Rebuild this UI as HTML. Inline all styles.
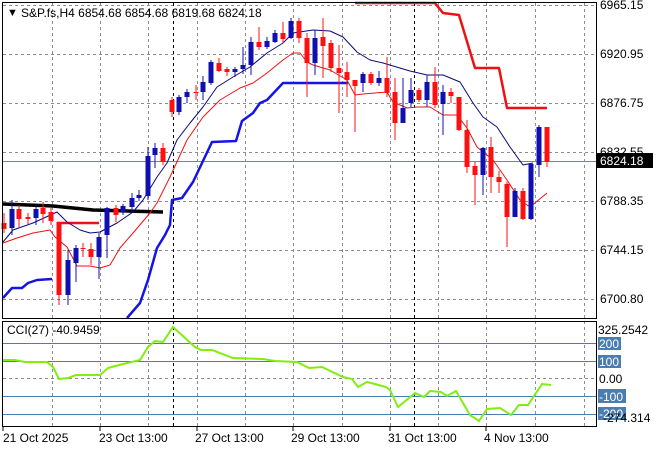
<!DOCTYPE html>
<html><head><meta charset="utf-8"><style>
html,body{margin:0;padding:0;background:#fff;}
svg{display:block;font-family:"Liberation Sans",sans-serif;}
</style></head><body>
<svg id="s" width="660" height="450" viewBox="0 0 660 450" xmlns="http://www.w3.org/2000/svg">
<rect width="660" height="450" fill="#fff"/>
<g id="grid" stroke="#8c8c98" stroke-width="1" stroke-dasharray="3,3" fill="none">
<path d="M3 5.5H596M3 54.5H596M3 103.5H596M3 152.5H596M3 201.5H596M3 250.5H596M3 299.5H596M3 378.5H596"/>
<path d="M52.5 3V318M100.5 3V318M148.5 3V318M197.5 3V318M245.5 3V318M293.5 3V318M342.5 3V318M390.5 3V318M438.5 3V318M486.5 3V318M535.5 3V318M584.5 3V318"/>
<path d="M52.5 321V426M100.5 321V426M148.5 321V426M197.5 321V426M245.5 321V426M293.5 321V426M342.5 321V426M390.5 321V426M438.5 321V426M486.5 321V426M535.5 321V426M584.5 321V426"/>
</g>
<path d="M173.5 3V318M414.5 3V318M173.5 321V426M414.5 321V426" stroke="#000" stroke-dasharray="3,3"/>
<path d="M3 161.5H596" stroke="#7c8490"/>
<path d="M3 343.5H596M3 361.5H596M3 396.5H596M3 414.5H596" stroke="#4a7eb0"/>
<g id="lines" fill="none" stroke-linejoin="round">
<polyline stroke="#1414e6" stroke-width="2.5" points="3,298 12,288 22,288 28,283 37,280 52,279"/>
<polyline stroke="#1414e6" stroke-width="2.5" points="127,318 140,303 148,280 157,248 165,235 170,225 172,200 182,198 193,182 212,142 236,141 242,121 253,113 260,103 267,100 283,83 348,83"/>
<polyline stroke="#ee1111" stroke-width="2.5" points="355,3 435,3 443,13 459,15 475,68 499,68 507,108 547,108"/>
<polyline stroke="#ee1111" stroke-width="2.5" points="57,223 99,223"/>
<polyline stroke="#000" stroke-width="3.5" points="3,204 53,206 93,210 163,212"/>
<polyline stroke="#0a0a80" stroke-width="1" points="3,242 13,230 33,223 57,212 67,222 80,230 90,233 100,232 117,223 133,212 143,200 157,177 167,163 177,140 190,123 203,107 217,87 233,77 250,67 267,53 283,43 293,33 313,30 330,31 343,37 357,52 370,60 383,63 410,71 427,75 443,75 460,82 473,103 483,117 497,127 510,147 523,165 533,163"/>
<polyline stroke="#ee1111" stroke-width="1" points="3,243 17,238 33,233 50,230 55,237 67,247 77,266 90,266 100,268 110,265 120,248 133,233 150,213 157,203 170,177 187,140 203,117 220,100 240,88 253,83 267,73 283,60 293,53 300,53 307,62 313,65 330,70 347,80 355,95 363,94 387,92 393,102 407,108 417,107 430,107 443,115 457,115 467,128 477,147 493,160 507,180 520,200 530,207 547,193"/>
</g>
<g id="c"></g>
<polyline fill="none" stroke="#80ee10" stroke-width="2" points="3,360 15,360 25,362 47,362 53,367 59,379 68,378 76,375 100,375 108,368 119,365 140,360 148,347 155,341 163,342 173,327 195,347 201,350 212,350 233,358 263,359 275,361 297,362 309,368 322,367 343,377 352,379 358,387 367,382 375,384 386,387 390,390 398,407 415,393 424,397 430,391 441,392 447,396 456,391 470,415 479,421 487,409 500,408 511,415 519,405 528,405 542,384 551,385"/>
<path d="M2.5 2.5H596.5V318.5H2.5Z M2.5 321.5H596.5V426.5H2.5Z" fill="none" stroke="#000"/>
<path d="M3 427v4M100 427v4M197 427v4M293 427v4M390 427v4M486 427v4" stroke="#000"/>
<g font-size="12" fill="#000">
<text x="7" y="16" font-size="11">▼</text>
<text x="21" y="17">S&amp;P.fs,H4  6854.68 6854.68 6819.68 6824.18</text>
<text x="600" y="9">6965.15</text>
<text x="600" y="58">6920.95</text>
<text x="600" y="107">6876.75</text>
<text x="600" y="156">6832.55</text>
<text x="600" y="205">6788.35</text>
<text x="600" y="254">6744.15</text>
<text x="600" y="303">6700.80</text>
<rect x="597" y="153" width="56" height="15" fill="#000"/>
<text x="600" y="165" fill="#fff">6824.18</text>
<text x="7" y="334">CCI(27) -40.9459</text>
<text x="598" y="334">325.2542</text>
<rect x="598" y="337" width="23" height="13" fill="#4a7eb0"/><text x="599" y="348" fill="#fff">200</text>
<rect x="598" y="355" width="23" height="13" fill="#4a7eb0"/><text x="599" y="366" fill="#fff">100</text>
<text x="599" y="383">0.00</text>
<rect x="598" y="389" width="28" height="14" fill="#4a7eb0"/><text x="599" y="401" fill="#fff">-100</text>
<rect x="598" y="407" width="28" height="13" fill="#4a7eb0"/><text x="599" y="418" fill="#fff">-200</text>
<text x="603" y="422">-274.314</text>
<text x="3" y="442">21 Oct 2025</text>
<text x="99" y="442">23 Oct 13:00</text>
<text x="195" y="442">27 Oct 13:00</text>
<text x="291" y="442">29 Oct 13:00</text>
<text x="388" y="442">31 Oct 13:00</text>
<text x="484" y="442">4 Nov 13:00</text>
</g>
</svg>
<script>
var d=[[4,223,229,213,233,'r'],[12,209,228,200,235,'b'],[19,209,219,205,227,'r'],[28,217,219,213,224,'r'],[36,209,218,205,225,'b'],[43,208,214,202,223,'r'],[51,212,221,208,225,'r'],[59,222,295,222,305,'r'],[68,260,295,250,305,'b'],[76,248,263,245,282,'b'],[83,248,249,243,257,'r'],[91,249,257,243,265,'r'],[99,237,257,233,279,'b'],[107,208,235,207,258,'b'],[116,208,215,205,222,'r'],[123,206,212,204,215,'b'],[132,198,207,193,212,'b'],[139,195,198,190,201,'b'],[148,156,196,147,200,'b'],[155,148,155,143,168,'b'],[163,148,162,143,165,'r'],[172,100,112,97,117,'r'],[179,97,112,95,115,'b'],[187,92,97,89,103,'b'],[196,92,93,85,100,'r'],[203,82,92,76,100,'b'],[211,62,83,60,85,'b'],[219,63,71,58,72,'r'],[227,69,72,67,76,'r'],[235,69,72,67,77,'b'],[243,65,69,47,74,'b'],[251,42,65,37,75,'b'],[259,42,47,27,50,'r'],[267,41,47,37,49,'b'],[275,33,42,30,43,'b'],[283,33,39,22,43,'r'],[291,21,38,18,39,'b'],[299,21,38,18,43,'r'],[307,38,63,33,97,'r'],[315,38,63,30,75,'b'],[323,37,46,18,78,'r'],[331,43,68,40,72,'r'],[339,68,73,45,113,'r'],[347,72,80,62,97,'r'],[355,80,86,80,132,'r'],[363,74,83,72,92,'b'],[371,74,83,72,85,'r'],[379,78,83,71,86,'b'],[387,78,93,57,97,'r'],[395,92,123,78,140,'r'],[403,108,123,78,123,'b'],[411,90,103,78,107,'b'],[419,90,100,88,102,'r'],[427,82,100,75,107,'b'],[435,82,105,67,108,'r'],[443,92,104,85,135,'b'],[451,92,96,88,103,'r'],[459,97,130,97,131,'r'],[467,130,167,120,173,'r'],[475,166,175,162,205,'r'],[483,148,175,147,195,'b'],[491,147,177,137,193,'r'],[499,177,182,171,193,'r'],[507,184,217,182,247,'r'],[515,191,217,188,217,'b'],[523,191,219,188,220,'r'],[531,164,219,163,220,'b'],[539,127,165,125,177,'b'],[547,127,162,127,167,'r']];
var g=document.getElementById('c'),s='';
d.forEach(function(a){var col=a[5]=='r'?'#ff1010':'#1010b0';
s+='<rect x="'+(a[0]-0.5)+'" y="'+a[3]+'" width="1" height="'+(a[4]-a[3])+'" fill="'+col+'"/>';
s+='<rect x="'+(a[0]-2.5)+'" y="'+a[1]+'" width="5" height="'+Math.max(1,a[2]-a[1])+'" fill="'+col+'"/>';});
g.innerHTML=s;
</script>
</body></html>
